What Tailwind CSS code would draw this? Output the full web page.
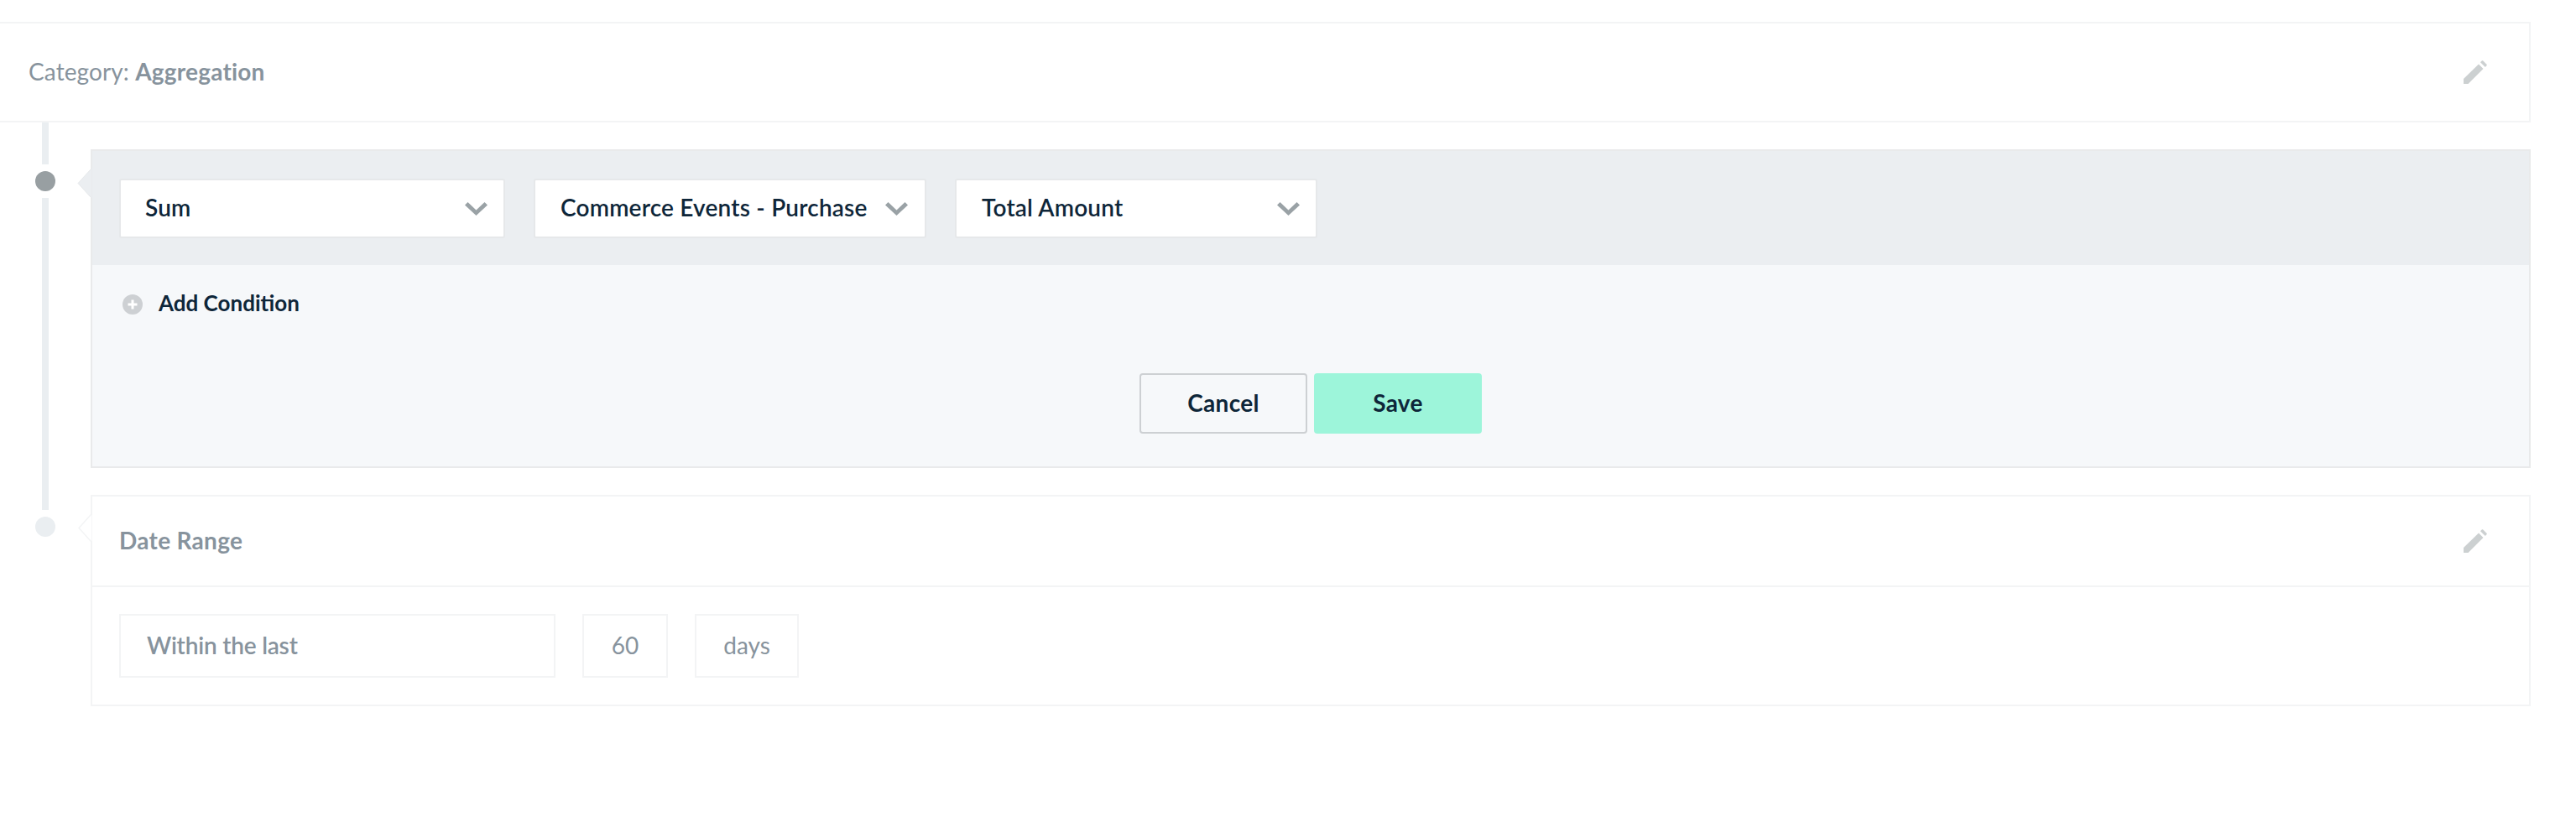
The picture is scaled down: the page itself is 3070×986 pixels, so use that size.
<!DOCTYPE html>
<html lang="en">
  <head>
    <meta charset="UTF-8" />
    <title>Aggregation</title>
    <script src="https://cdn.jsdelivr.net/npm/@tailwindcss/browser@4"></script>
  </head>
  <body class="bg-white min-h-screen pt-[26px] pr-[54px] font-['Lato','Liberation_Sans',sans-serif] text-[28px] text-[#0e2639]">
    <!-- category bar -->
    <div class="h-[120px] pl-[34px] pr-[50px] flex items-center justify-between border-y-2 border-r-2 border-[#f3f4f5]">
      <p class="pb-[3px] text-[#87939d] tracking-[0.1px]">Category: <b class="font-bold tracking-[0.2px]">Aggregation</b></p>
      <svg class="w-[28px] h-[28px] fill-[#ccd0d1]" viewBox="0 0 28 28"><path d="M0 28V22L18 4.500L23.500 10L5.500 28Z" /><path d="M20 2.200L22 .3Q22.500 0 23 .3L27.700 5Q28 5.500 27.700 6L25.800 8Z" /></svg>
    </div>

    <div class="flex">
      <!-- timeline rail -->
      <div class="w-[108px] pl-[42px] shrink-0">
        <div class="w-[24px] flex flex-col items-center">
          <div class="w-[8px] h-[50px] bg-[#eaeef1]"></div>
          <div class="w-[24px] h-[24px] mt-[8px] rounded-full bg-[#989fa2]"></div>
          <div class="w-[8px] h-[372px] mt-[8px] bg-[#eaeef1]"></div>
          <div class="w-[24px] h-[24px] mt-[8px] rounded-full bg-[#eaeef1]"></div>
        </div>
      </div>

      <div class="flex-1 pt-[32px] flex flex-col gap-[32px]">
        <!-- editing step -->
        <div class="relative h-[380px] border-2 border-[#e9eaeb] bg-[#f6f8fa] flex flex-col">
          <svg class="absolute left-[-19px] top-[20px] w-[19px] h-[37px]" viewBox="0 0 19 37"><path d="M19 0V37L17 35L2 18.500L17 2Z" fill="#ebeef1" stroke="#e7e9eb" stroke-width="1" /></svg>
          <div class="h-[136px] shrink-0 bg-[#ebeef1] pl-[32px] pt-[33px] flex items-start gap-[34px] font-semibold tracking-[0.2px]">
            <div class="w-[460px] h-[71px] pl-[29px] pr-[19px] pb-[4px] flex items-center justify-between bg-white border-2 border-[#e6e8ea] rounded-[3px]">
              <span>Sum</span>
              <svg class="w-[27px] h-[16px] mt-[4px] fill-[#9aa2a6]" viewBox="0 0 27 16"><path d="M3.500 0L13.500 9.500L23.500 0L27 3.500L13.500 16L0 3.500Z" /></svg>
            </div>
            <div class="w-[468px] h-[71px] pl-[30px] pr-[20px] pb-[4px] flex items-center justify-between bg-white border-2 border-[#e6e8ea] rounded-[3px]">
              <span class="whitespace-nowrap">Commerce Events - Purchase</span>
              <svg class="w-[27px] h-[16px] mt-[4px] fill-[#9aa2a6]" viewBox="0 0 27 16"><path d="M3.500 0L13.500 9.500L23.500 0L27 3.500L13.500 16L0 3.500Z" /></svg>
            </div>
            <div class="w-[432px] h-[71px] pl-[30px] pr-[19px] pb-[4px] flex items-center justify-between bg-white border-2 border-[#e6e8ea] rounded-[3px]">
              <span>Total Amount</span>
              <svg class="w-[27px] h-[16px] mt-[4px] fill-[#9aa2a6]" viewBox="0 0 27 16"><path d="M3.500 0L13.500 9.500L23.500 0L27 3.500L13.500 16L0 3.500Z" /></svg>
            </div>
          </div>
          <div class="pl-[36px] pt-[32px] flex items-center gap-[19px] text-[26px] font-bold -mt-[6px]">
            <svg class="w-[24px] h-[24px] -mt-[1px]" viewBox="0 0 24 24"><circle cx="12" cy="12" r="12" fill="#cdd0d3" /><path d="M10.500 6.500H13.500V10.500H17.500V13.500H13.500V17.500H10.500V13.500H6.500V10.500H10.500Z" fill="#fff" /></svg>
            <span class="pb-[4px]">Add Condition</span>
          </div>
          <div class="mt-[60px] flex justify-center gap-[8px] font-bold tracking-[0.3px]">
            <button class="w-[200px] h-[72px] pb-[3px] border-2 border-[#cdd0d3] rounded-[4px]">Cancel</button>
            <button class="w-[200px] h-[72px] pb-[3px] bg-[#9df5da] rounded-[4px]">Save</button>
          </div>
        </div>

        <!-- date range step -->
        <div class="relative h-[252px] border-2 border-[#f3f4f5] text-[#87939d]">
          <svg class="absolute left-[-18px] top-[20px] w-[18px] h-[35px]" viewBox="0 0 18 35"><path d="M18 0V35L16 33L2 17.500L16 2Z" fill="#fff" stroke="#f3f4f5" stroke-width="1.500" /></svg>
          <div class="h-[108px] pl-[32px] pr-[50px] flex items-center justify-between border-b-2 border-[#f3f4f5]">
            <span class="pb-[2px] font-bold tracking-[0.3px]">Date Range</span>
            <svg class="w-[28px] h-[28px] fill-[#ccd0d1]" viewBox="0 0 28 28"><path d="M0 28V22L18 4.500L23.500 10L5.500 28Z" /><path d="M20 2.200L22 .3Q22.500 0 23 .3L27.700 5Q28 5.500 27.700 6L25.800 8Z" /></svg>
          </div>
          <div class="pl-[32px] pt-[32px] flex gap-[32px]">
            <div class="w-[520px] h-[76px] pl-[31px] pb-[3px] flex items-center border-2 border-[#f3f4f5] font-semibold tracking-[-0.2px]">Within the last</div>
            <div class="w-[102px] h-[76px] pb-[3px] flex items-center justify-center border-2 border-[#f3f4f5]">60</div>
            <div class="w-[124px] h-[76px] pb-[3px] flex items-center justify-center border-2 border-[#f3f4f5]">days</div>
          </div>
        </div>
      </div>
    </div>
  </body>
</html>
